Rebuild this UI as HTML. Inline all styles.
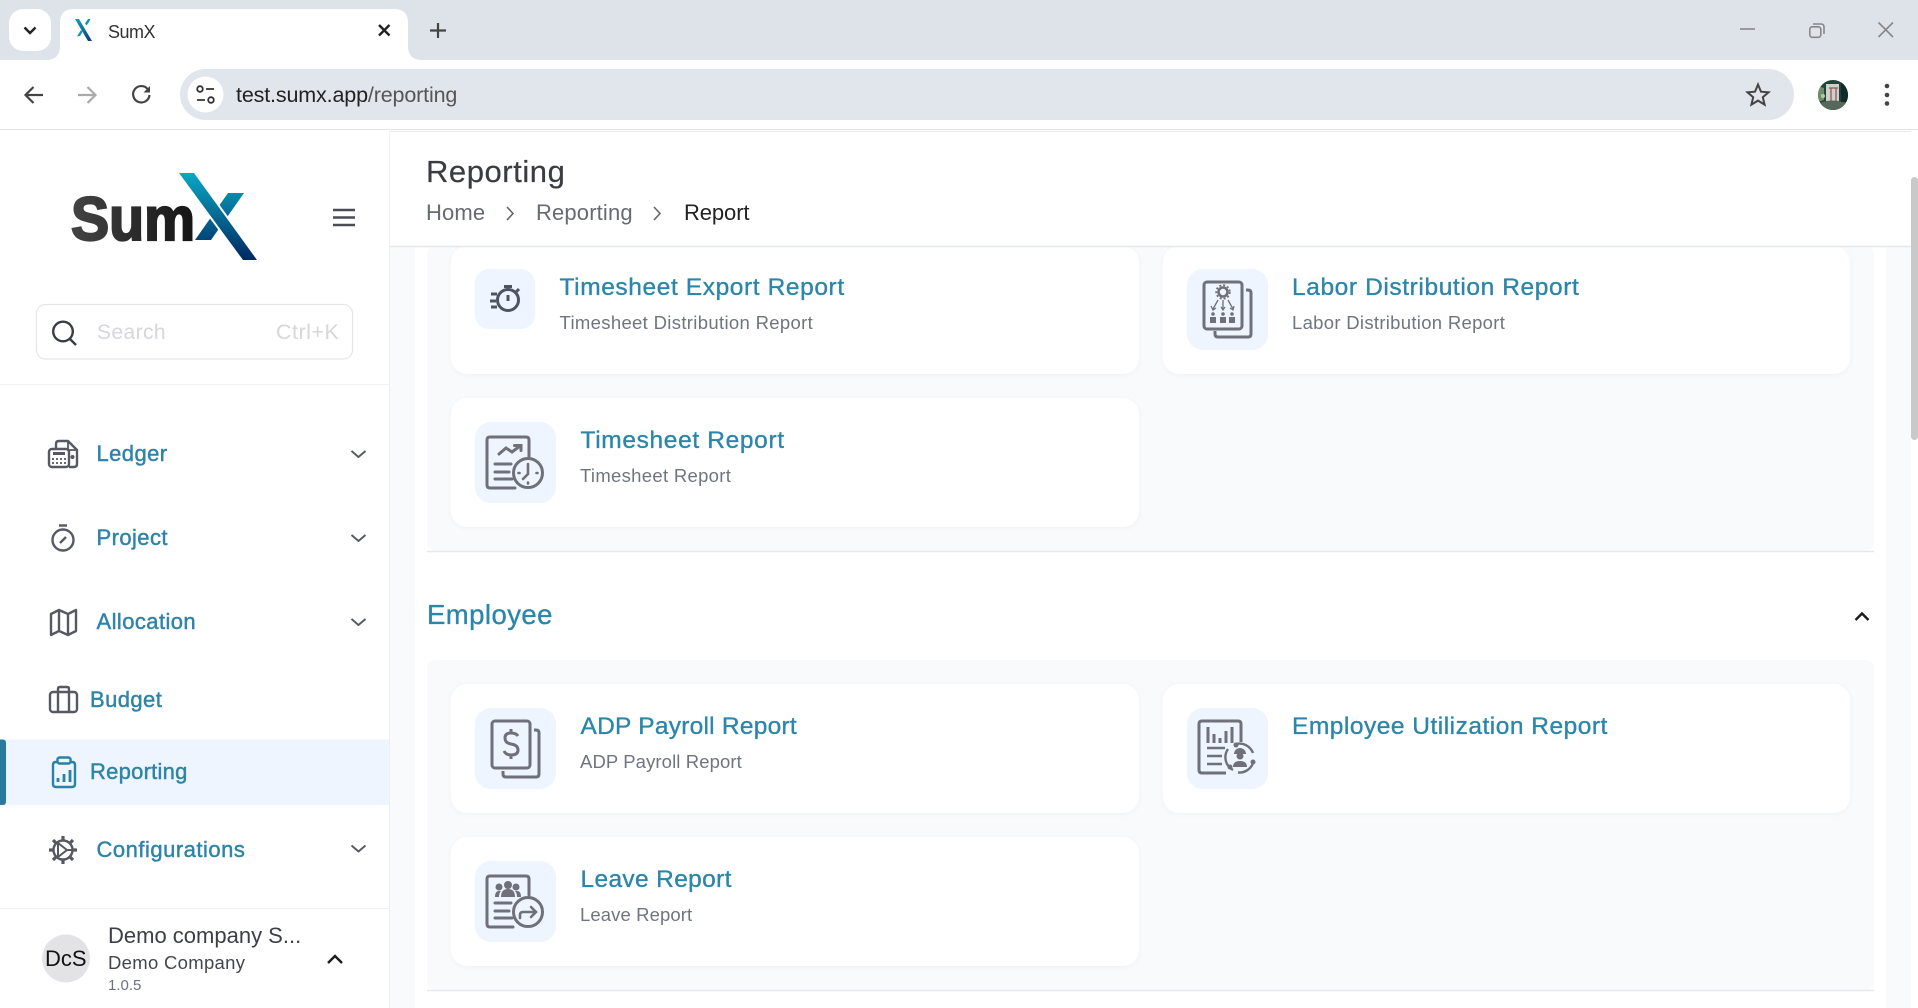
<!DOCTYPE html>
<html><head><meta charset="utf-8"><title>SumX</title>
<style>
html,body{margin:0;padding:0;width:1918px;height:1008px;overflow:hidden;background:#fff;font-family:"Liberation Sans",sans-serif}
svg.bg{position:absolute;left:0;top:0}
.t{position:absolute;white-space:nowrap;line-height:30px;height:30px}
.nav{color:#2e84a8;font-size:22px;letter-spacing:.42px;-webkit-text-stroke:.45px #2e84a8}
.ti{color:#2b86aa;font-size:24.5px;letter-spacing:.55px;-webkit-text-stroke:.35px #2b86aa}
.su{color:#6f7580;font-size:18.5px;letter-spacing:.3px}
.cr{color:#666a72;font-size:22px;letter-spacing:.15px}
</style></head><body>
<svg class="bg" width="1918" height="1008" viewBox="0 0 1918 1008" fill="none">
<defs>
<linearGradient id="xg" x1="0" y1="173" x2="0" y2="261" gradientUnits="userSpaceOnUse"><stop offset="0" stop-color="#0aa8c4"/><stop offset="1" stop-color="#002660"/></linearGradient>
<linearGradient id="fg" x1="0" y1="19" x2="0" y2="41" gradientUnits="userSpaceOnUse"><stop offset="0" stop-color="#0f9fbd"/><stop offset="1" stop-color="#0a3f78"/></linearGradient>
<linearGradient id="sg" x1="72" y1="0" x2="195" y2="0" gradientUnits="userSpaceOnUse"><stop offset="0" stop-color="#444"/><stop offset="1" stop-color="#141414"/></linearGradient>
</defs>
<!-- browser chrome -->
<rect width="1918" height="60" fill="#dee3ea"/>
<path d="M0 74Q0 60 14 60H1904Q1918 60 1918 74V130H0Z" fill="#fff"/>
<path d="M46 60Q60 60 60 46V23Q60 9 74 9H394Q408 9 408 23V46Q408 60 422 60Z" fill="#fff"/>
<rect x="9" y="9" width="42" height="42" rx="14" fill="#fff"/>
<path d="M24.500 27.500l5.500 5.500 5.500-5.500" stroke="#222" stroke-width="2.400"/>
<path d="M75 19h4l13 22h-4Z" fill="url(#fg)"/><path d="M89 22l1.500-3h-2.500l-3 4.500 1.500 2zM80 36l2.500-4-1.500-2-4 6.500z" fill="#1591b3"/>
<path d="M379 25l10.500 10.500M389.500 25L379 35.500" stroke="#222" stroke-width="2.400"/>
<path d="M438 23v15M430 30.500h16" stroke="#444" stroke-width="2.200"/>
<path d="M1740 29h15" stroke="#888" stroke-width="1.600"/>
<rect x="1809.800" y="26.800" width="11" height="10.500" rx="2.500" stroke="#888" stroke-width="1.600"/>
<path d="M1813 24h8q3 0 3 3v7" stroke="#888" stroke-width="1.600"/>
<path d="M1878.500 22.500l14.500 14.500M1893 22.500L1878.500 37" stroke="#888" stroke-width="1.600"/>
<path d="M43 95H26M33.500 87l-8 8 8 8" stroke="#444" stroke-width="2.200"/>
<path d="M78 95h17M87.500 87l8 8-8 8" stroke="#aaa" stroke-width="2.200"/>
<path d="M148 89.500a8.200 8.200 0 1 0 1.500 5.500" stroke="#444" stroke-width="2.200"/><path d="M150 86v6.500h-6.500z" fill="#444"/>
<rect x="180" y="69" width="1614" height="51" rx="25.500" fill="#e1e6ed"/>
<circle cx="205.500" cy="94.500" r="18" fill="#fff"/>
<circle cx="200" cy="89" r="2.800" stroke="#333" stroke-width="1.800"/><path d="M206 89h8M197 100h8" stroke="#333" stroke-width="1.800"/><circle cx="211" cy="100" r="2.800" stroke="#333" stroke-width="1.800"/>
<path d="M1758 84.500l3 7.200 7.500.6-5.700 4.900 1.800 7.400-6.600-4-6.600 4 1.800-7.400-5.700-4.900 7.500-.6z" stroke="#444" stroke-width="2"/>
<clipPath id="av"><circle cx="1833" cy="95" r="15"/></clipPath>
<g clip-path="url(#av)"><rect x="1818" y="80" width="30" height="30" fill="#24423a"/><path d="M1826 84h13v17h-13z" fill="#c9d2cc"/><path d="M1818 86l6 2v12l-6 2z" fill="#6f8f6a"/><path d="M1829 88h9M1831 88v13M1836 88v13" stroke="#a85050" stroke-width="1.300"/><path d="M1820 103q12-5 26 0v8h-26z" fill="#56685a"/><path d="M1841 82h7v20h-7z" fill="#102c2a"/><circle cx="1823" cy="96" r="2" fill="#b7c8ae"/></g>
<circle cx="1887" cy="86" r="2.300" fill="#444"/><circle cx="1887" cy="95" r="2.300" fill="#444"/><circle cx="1887" cy="103.500" r="2.300" fill="#444"/>
<path d="M0 129.500h1918" stroke="#e3e3e3"/>
<!-- layout -->
<rect x="390" y="131" width="1521" height="877" fill="#fff"/>
<rect x="390" y="246" width="25" height="762" fill="#f9fafc"/>
<rect x="1886" y="246" width="25" height="762" fill="#f9fafc"/>
<path d="M389.500 131v877" stroke="#eef0f3"/>
<rect x="427" y="246" width="1447" height="305" rx="8" fill="#f9fafc"/>
<path d="M427 551.500h1447" stroke="#e6e7ea" stroke-width="1.500"/>
<rect x="427" y="660" width="1447" height="330" rx="8" fill="#f9fafc"/>
<path d="M427 990.500h1447" stroke="#e6e7ea" stroke-width="1.500"/>
<rect x="1911" y="177" width="7" height="263" rx="3.500" fill="#c9c9c9"/>
<!-- cards -->
<g fill="#fff" style="filter:drop-shadow(0 1px 2px rgba(40,50,70,.05))">
<rect x="451" y="246" width="688" height="128" rx="16"/><rect x="1163" y="246" width="687" height="128" rx="16"/>
<rect x="451" y="398" width="688" height="129" rx="16"/>
<rect x="451" y="684" width="688" height="129" rx="16"/><rect x="1163" y="684" width="687" height="129" rx="16"/>
<rect x="451" y="837" width="688" height="129" rx="16"/>
</g>
<rect x="390" y="131" width="1521" height="115" fill="#fff"/>
<path d="M390 131.500h1521" stroke="#e9eaec"/>
<path d="M390 246.500h1521" stroke="#e6e7ea" stroke-width="1.500"/>
<g fill="#eef5ff">
<rect x="475" y="269" width="60" height="60" rx="14"/><rect x="1187" y="269" width="81" height="81" rx="16"/>
<rect x="475" y="422" width="81" height="81" rx="16"/>
<rect x="475" y="708" width="81" height="81" rx="16"/><rect x="1187" y="708" width="81" height="81" rx="16"/>
<rect x="475" y="861" width="81" height="81" rx="16"/>
</g>
<!-- timesheet export -->
<g stroke="#4d5563" stroke-width="3"><circle cx="508" cy="300" r="10.500"/><path d="M508 295v6M504 286.500h8M508 287v3M516 292l3-3"/><path d="M491 294h6M490 301h6M491 307h6"/></g>
<!-- timesheet report -->
<g stroke="#6f7079" stroke-width="3" stroke-linecap="round"><path d="M515 488h-25q-3 0-3-3v-45q0-3 3-3h36q3 0 3 3v17"/><circle cx="528" cy="473" r="14.500" fill="#eef5ff"/><path d="M528 464v10l-5 5M536.500 473h1M518.500 473h1M528 482.500v1" stroke-width="2.600"/><path d="M495 464h16M495 472h14M495 479h17"/><path d="M499 454l7-6 6 4 8-6M514.500 445.500h6.500v5"/></g>
<!-- labor -->
<g stroke="#6f7079" stroke-width="3"><rect x="1204" y="282" width="38" height="47" rx="3"/><path d="M1246 290h2q3 0 3 3v41q0 3-3 3h-30q-3 0-3-3v-3"/><circle cx="1223" cy="292" r="4.500" stroke-width="2.600"/><circle cx="1223" cy="292" r="6.800" stroke-width="1.800" stroke-dasharray="2 2"/></g>
<g stroke="#6f7079" stroke-width="1.300" fill="none"><path d="M1218 300l-5 9M1223 300v9M1228 300l5 9M1211 306l2 4 3-2M1221 307l2 3 2-3M1230 308l3 2 1-4"/></g>
<g fill="#6f7079"><circle cx="1213" cy="314" r="1.800"/><circle cx="1223" cy="314" r="1.800"/><circle cx="1232" cy="314" r="1.800"/><rect x="1210" y="317" width="6" height="6"/><rect x="1220" y="317" width="6" height="6"/><rect x="1229" y="317" width="6" height="6"/></g>
<!-- adp -->
<g stroke="#6f7079" stroke-width="3"><rect x="492" y="721" width="38" height="47" rx="3"/><path d="M534 730h2q3 0 3 3v41q0 3-3 3h-30q-3 0-3-3v-3"/><path d="M518 736q-2-3-7-3-6 0-6 5t6 6q7 1 7 6t-7 5q-5 0-7-4M511 729v4M511 755v4"/></g>
<!-- employee utilization -->
<g stroke="#6f7079" stroke-width="3"><path d="M1226 773h-24q-3 0-3-3v-46q0-3 3-3h36q3 0 3 3v18"/><path d="M1208 727v16M1214 734v9M1226 731v12M1232 727v16M1220 738v5" stroke-width="3"/><path d="M1207 748h18M1207 756h15M1207 764h15" stroke-width="2.600"/><path d="M1236 744a14.500 14.500 0 0 1 17 9M1253 763a14.500 14.500 0 0 1-15 9.500M1233 770a14.500 14.500 0 0 1-5-21" stroke-width="2.400"/></g>
<g fill="#6f7079"><circle cx="1236" cy="745" r="2.500"/><circle cx="1253" cy="762" r="2.500"/><circle cx="1230" cy="767" r="2.500"/><path d="M1234 754a6 6 0 0 1 12 0z"/><circle cx="1240" cy="756" r="3.500"/><path d="M1233 767q0-6 7-6t7 6z"/></g>
<!-- leave -->
<g stroke="#6f7079" stroke-width="3" stroke-linecap="round"><path d="M513 927h-23q-3 0-3-3v-45q0-3 3-3h36q3 0 3 3v16"/><circle cx="528" cy="912" r="14.500" fill="#eef5ff"/><path d="M495 903h16M495 911h14M495 918h17"/><path d="M520 918v-3q0-3 3-3h12M531 907l5 5-5 5" stroke-width="2.600"/></g>
<g fill="#6f7079"><circle cx="499" cy="887" r="3.500"/><circle cx="516" cy="887" r="3.500"/><circle cx="508" cy="885" r="4"/><path d="M495 897q0-6 4-6h2q-2 2-2 6zM521 897q0-6-4-6h-2q2 2 2 6zM501 897q0-8 7-8t7 8z"/></g>
<!-- employee chevron -->
<path d="M1855.500 620l6.500-6.500 6.500 6.500" stroke="#1c1c1c" stroke-width="2.400"/>
<!-- header breadcrumb chevrons -->
<path d="M507 207l6 6.500-6 6.500M654 207l6 6.500-6 6.500" stroke="#666" stroke-width="1.600"/>
<!-- logo -->
<text x="71" y="240" font-family="Liberation Sans" font-weight="700" font-size="61" textLength="124" lengthAdjust="spacingAndGlyphs" fill="url(#sg)" stroke="url(#sg)" stroke-width="2.200">Sum</text>
<path d="M228 193h16l-33 47h-16z" fill="url(#xg)"/>
<path d="M179 173h15l63 87h-14z" fill="#fff" stroke="#fff" stroke-width="4"/>
<path d="M179 173h15l63 87h-14z" fill="url(#xg)"/>
<path d="M333 210h22M333 217.500h22M333 225h22" stroke="#4b4d55" stroke-width="2.600"/>
<!-- search -->
<rect x="36.500" y="304.500" width="316" height="54.500" rx="9" stroke="#e6e6ea" stroke-width="1.200"/>
<circle cx="63" cy="331.500" r="9.800" stroke="#3a3d45" stroke-width="2.400"/><path d="M70 339l6 6" stroke="#3a3d45" stroke-width="2.400"/>
<path d="M0 384.500h389" stroke="#f1f2f4"/>
<!-- nav icons -->
<g stroke="#565862" stroke-width="2.400" stroke-linejoin="round">
<path d="M56 448v-4q0-3 3-3h9l9 9v14q0 3-3 3H69"/><path d="M68 441v9h9" stroke-width="1.800"/><rect x="49" y="449" width="20" height="18" rx="3" fill="#fff"/><path d="M53 453.500h12" stroke-width="3"/><path d="M52 459h2M56 459h2M60 459h2M64 459h2M52 463h2M56 463h2M60 463h2M64 463h2" stroke-width="1.800"/><circle cx="72.500" cy="457" r="2" fill="#565862" stroke="none"/>
<circle cx="63" cy="540" r="10.500"/><path d="M59 525.500h8" stroke-width="2.400"/><path d="M60 543l6-6"/>
<path d="M51 614l8-4 9 4 8-4v21l-8 4-9-4-8 4zM59 610v21M68 614v21"/>
<rect x="50" y="692" width="27" height="20" rx="3"/><path d="M58 692v-3q0-2 2-2h7q2 0 2 2v3M58 692v20M69 692v20"/>
<circle cx="63" cy="850" r="9.500" stroke-width="2.400"/><path d="M63 836v4M63 860v4M49 850h4M73 850h4M53 840l3 3M70 857l3 3M73 840l-3 3M56 857l-3 3" stroke-width="3.200"/><path d="M58 843l9 7-9 7zM67 850h6" stroke-width="2"/>
<path d="M351.500 451l7 6 7-6M351.500 535l7 6 7-6M351.500 619l7 6 7-6M351.500 845.500l7 6 7-6" stroke-width="1.900"/>
</g>
<!-- active -->
<rect x="0" y="739.500" width="389" height="65.500" fill="#eef5ff"/>
<rect x="-4" y="739.500" width="10" height="65.500" rx="3" fill="#2b7a9e"/>
<g stroke="#2b80a5" stroke-width="2.400"><path d="M57 762h-1q-3 0-3 3v19q0 3 3 3h16q3 0 3-3v-19q0-3-3-3h-1"/><rect x="57.500" y="757.500" width="13" height="6" rx="2"/><path d="M58 782v-4M64 782v-8M70 782v-12" stroke-width="2.800"/></g>
<path d="M0 908.500h389" stroke="#eef0f2"/>
<circle cx="66" cy="958.500" r="24" fill="#e3e3e6"/>
<path d="M328 963l7-7 7 7" stroke="#1c1c1c" stroke-width="2.400"/>
</svg>

<div class="t" style="left:108px;top:17px;font-size:18px;color:#333;letter-spacing:-.5px">SumX</div>
<div class="t" style="left:236px;top:80px;font-size:21.500px;color:#222;letter-spacing:-.15px">test.sumx.app<span style="color:#555">/reporting</span></div>

<div class="t" style="left:97px;top:318px;font-size:21px;color:#d6d6dc;letter-spacing:.4px">Search</div>
<div class="t" style="left:276px;top:317px;font-size:21.500px;color:#d6d6dc;letter-spacing:.5px">Ctrl+K</div>

<div class="t nav" style="left:96.500px;top:439px">Ledger</div>
<div class="t nav" style="left:96.500px;top:523px">Project</div>
<div class="t nav" style="left:96.500px;top:607px">Allocation</div>
<div class="t nav" style="left:90px;top:685px">Budget</div>
<div class="t nav" style="left:90px;top:757px;letter-spacing:.25px">Reporting</div>
<div class="t nav" style="left:96.500px;top:835px;letter-spacing:.5px">Configurations</div>

<div class="t" style="left:45px;top:944px;font-size:22px;color:#111">DcS</div>
<div class="t" style="left:108px;top:921px;font-size:22px;color:#3d3f47;letter-spacing:0">Demo company S...</div>
<div class="t" style="left:108px;top:948px;font-size:18.500px;color:#44464e;letter-spacing:.3px">Demo Company</div>
<div class="t" style="left:108px;top:971px;font-size:15px;color:#6b7280">1.0.5</div>

<div class="t" style="left:426px;top:157px;font-size:31px;color:#3a3c42;letter-spacing:.55px;-webkit-text-stroke:.2px #3a3c42">Reporting</div>
<div class="t cr" style="left:426px;top:198px">Home</div>
<div class="t cr" style="left:536px;top:198px">Reporting</div>
<div class="t" style="left:684px;top:198px;font-size:22px;color:#222;letter-spacing:-.1px">Report</div>

<div class="t" style="left:427px;top:600px;font-size:27.500px;color:#2b86aa;letter-spacing:.45px;-webkit-text-stroke:.35px #2b86aa">Employee</div>

<div class="t ti" style="left:559.500px;top:273px;letter-spacing:.6px">Timesheet Export Report</div>
<div class="t su" style="left:559.500px;top:308px;letter-spacing:.33px">Timesheet Distribution Report</div>
<div class="t ti" style="left:1292px;top:273px;letter-spacing:.6px">Labor Distribution Report</div>
<div class="t su" style="left:1292px;top:308px;letter-spacing:.3px">Labor Distribution Report</div>
<div class="t ti" style="left:580.500px;top:426px;letter-spacing:.65px">Timesheet Report</div>
<div class="t su" style="left:580px;top:461px;letter-spacing:.3px">Timesheet Report</div>
<div class="t ti" style="left:580.500px;top:712px;letter-spacing:.25px">ADP Payroll Report</div>
<div class="t su" style="left:580px;top:747px;letter-spacing:.1px">ADP Payroll Report</div>
<div class="t ti" style="left:1292px;top:712px;letter-spacing:.5px">Employee Utilization Report</div>
<div class="t ti" style="left:580.500px;top:865px;letter-spacing:.35px">Leave Report</div>
<div class="t su" style="left:580px;top:900px;letter-spacing:.1px">Leave Report</div>
</body></html>
